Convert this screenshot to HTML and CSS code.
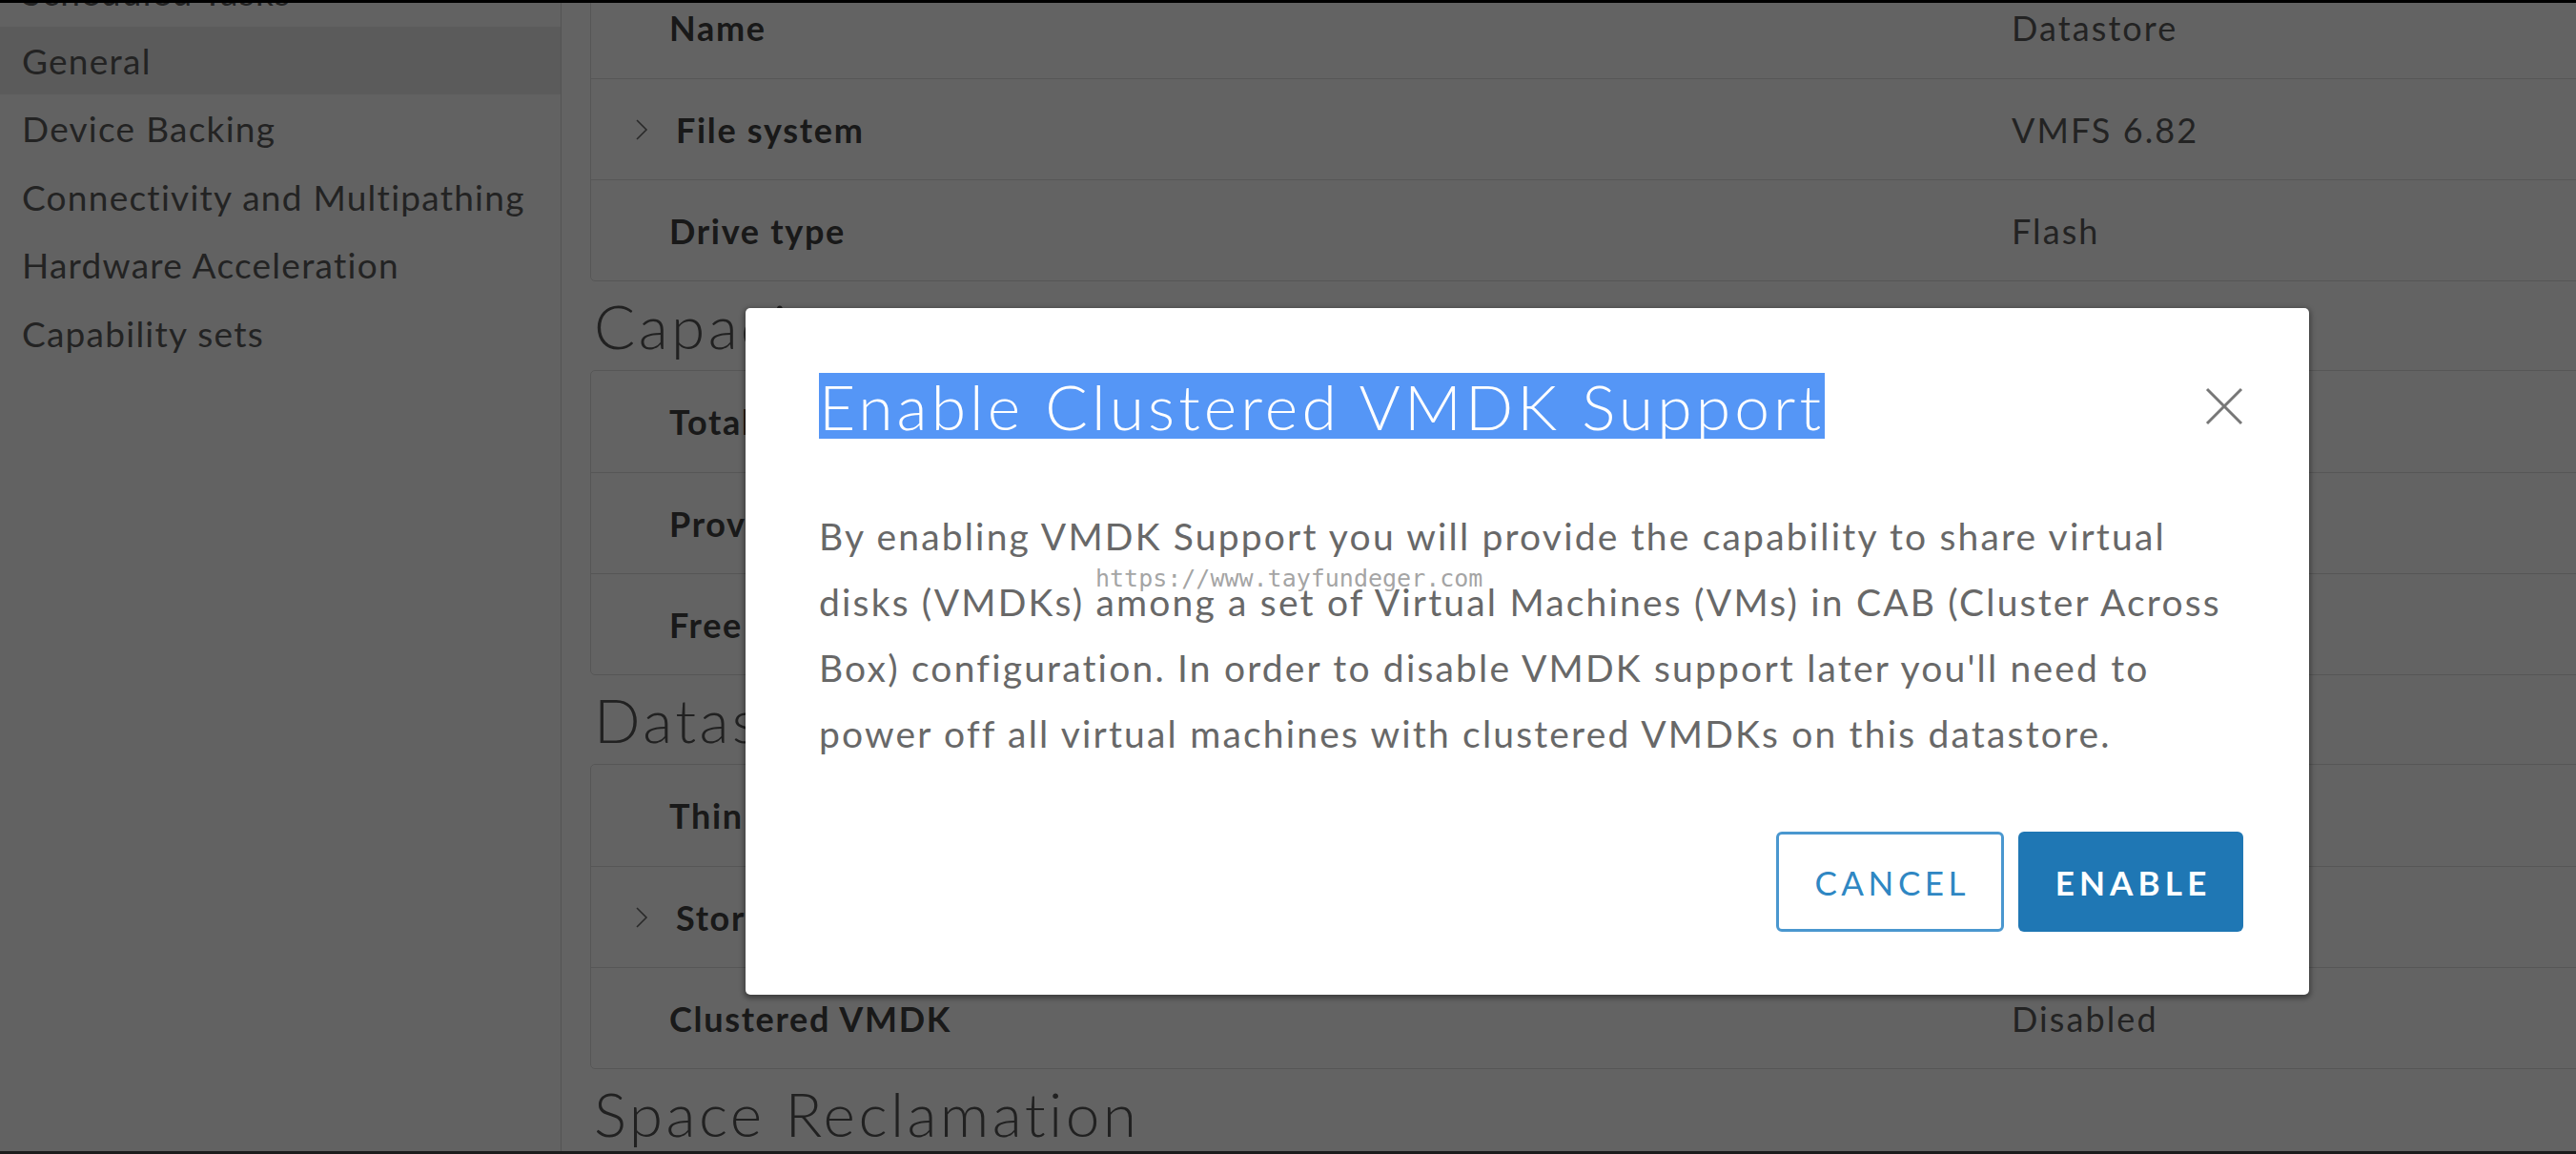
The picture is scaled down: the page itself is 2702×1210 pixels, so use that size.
FILE: index.html
```html
<!DOCTYPE html>
<html lang="en">
<head>
<meta charset="utf-8">
<title>Enable Clustered VMDK Support</title>
<link rel="stylesheet" href="styles.css">
</head>
<body>
<div class="app">
  <nav class="sidebar">
    <ul class="nav">
      <li class="nav-item">Scheduled Tasks</li>
      <li class="nav-item active">General</li>
      <li class="nav-item">Device Backing</li>
      <li class="nav-item">Connectivity and Multipathing</li>
      <li class="nav-item">Hardware Acceleration</li>
      <li class="nav-item">Capability sets</li>
    </ul>
  </nav>
  <main class="main">
    <div class="content">
      <section class="card">
        <div class="row"><div class="label">Name</div><div class="value">Datastore</div></div>
        <div class="row"><div class="label expandable"><svg class="caret" viewBox="0 0 14 24"><polyline points="2,2 12,12 2,22"/></svg>File system</div><div class="value">VMFS 6.82</div></div>
        <div class="row"><div class="label">Drive type</div><div class="value">Flash</div></div>
      </section>
      <h2 class="section-title">Capacity</h2>
      <section class="card">
        <div class="row"><div class="label">Total Capacity</div><div class="value"></div></div>
        <div class="row"><div class="label">Provisioned Space</div><div class="value"></div></div>
        <div class="row"><div class="label">Free Space</div><div class="value"></div></div>
      </section>
      <h2 class="section-title">Datastore Capabilities</h2>
      <section class="card">
        <div class="row"><div class="label">Thin Provisioning</div><div class="value"></div></div>
        <div class="row"><div class="label expandable"><svg class="caret" viewBox="0 0 14 24"><polyline points="2,2 12,12 2,22"/></svg>Storage I/O Control</div><div class="value"></div></div>
        <div class="row"><div class="label">Clustered VMDK</div><div class="value">Disabled</div></div>
      </section>
      <h2 class="section-title">Space Reclamation</h2>
    </div>
  </main>

  <div class="backdrop"></div>

  <div class="modal" role="dialog">
    <div class="modal-header">
      <h3 class="modal-title"><span class="selected">Enable Clustered VMDK Support</span></h3>
      <button class="close" aria-label="Close"><svg viewBox="0 0 40 40"><line x1="2" y1="2" x2="38" y2="38"/><line x1="38" y1="2" x2="2" y2="38"/></svg></button>
    </div>
    <div class="modal-body">
      <p class="message">By enabling VMDK Support you will provide the capability to share virtual<br>disks (VMDKs) among a set of Virtual Machines (VMs) in CAB (Cluster Across<br>Box) configuration. In order to disable VMDK support later you'll need to<br>power off all virtual machines with clustered VMDKs on this datastore.</p>
      <span class="watermark">https://www.tayfundeger.com</span>
    </div>
    <div class="modal-footer">
      <button class="btn btn-outline">CANCEL</button>
      <button class="btn btn-primary">ENABLE</button>
    </div>
  </div>
</div>
</body>
</html>
```

FILE: styles.css
```css
* { box-sizing: border-box; }
html, body { margin: 0; padding: 0; }
body {
  font-family: Lato, "Open Sans", sans-serif;
  background: #fff;
  overflow: hidden;
}
.app {
  position: relative;
  display: flex;
  height: 1210px;
  border-top: 3px solid #000;
  border-bottom: 3px solid #1c1c1c;
  overflow: hidden;
  background: #fff;
}

/* sidebar */
.sidebar {
  width: 589px;
  flex: none;
  border-right: 1px solid #d9d9d9;
  background: #fdfdfd;
}
.nav { list-style: none; margin: -47px 0 0; padding: 0; }
.nav-item {
  height: 71.5px;
  line-height: 71.5px;
  padding-left: 23px;
  font-size: 37px;
  letter-spacing: 0.034em;
  color: #5c5c5c;
  white-space: nowrap;
}
.nav-item.active { background: #ebebeb; }

/* main */
.main { flex: 1; min-width: 0; padding-left: 30px; }
.content { margin-top: -28px; margin-right: -20px; }
.card { border: 1px solid #dedede; border-radius: 5px; }
.row {
  display: grid;
  grid-template-columns: 1490px 1fr;
  align-items: center;
  height: 106px;
  border-top: 1px solid #dedede;
}
.row:first-child { border-top: 0; }
.label {
  display: flex;
  align-items: center;
  padding-left: 82px;
  font-size: 36px;
  font-weight: 700;
  letter-spacing: 0.047em;
  color: #404040;
  white-space: nowrap;
}
.label.expandable { padding-left: 46px; }
.caret {
  width: 14px;
  height: 24px;
  margin-right: 29px;
  fill: none;
  stroke: #6a6a6a;
  stroke-width: 1.6;
}
.value {
  font-size: 36px;
  letter-spacing: 0.058em;
  color: #5a5a5a;
  white-space: nowrap;
}
.section-title {
  margin: 0;
  height: 93px;
  line-height: 93px;
  padding-left: 4px;
  font-size: 64px;
  font-weight: 300;
  letter-spacing: 0.053em;
  color: #555;
  white-space: nowrap;
}

/* overlay + modal */
.backdrop { position: absolute; inset: 0; background: rgba(0, 0, 0, 0.61); }
.modal {
  position: absolute;
  left: 782px;
  top: 320px;
  width: 1640px;
  height: 720px;
  padding: 68px 69px 68px 77px;
  background: #fff;
  border-radius: 5px;
  box-shadow: 0 2px 5px 2px rgba(0, 0, 0, 0.35);
  display: flex;
  flex-direction: column;
}
.modal-header {
  display: flex;
  align-items: center;
  justify-content: space-between;
  height: 69px;
}
.modal-title {
  margin: 0;
  font-size: 66px;
  font-weight: 300;
  letter-spacing: 0.062em;
  line-height: 69px;
}
.selected {
  display: inline-block;
  height: 69px;
  background: #5596f6;
  color: #fff;
  white-space: nowrap;
}
.close {
  width: 40px;
  height: 40px;
  padding: 0;
  border: 0;
  background: none;
}
.close svg { display: block; width: 40px; height: 40px; stroke: #777; stroke-width: 3; }
.modal-body { position: relative; margin-top: 68px; }
.message {
  margin: 0;
  font-size: 39px;
  letter-spacing: 0.056em;
  line-height: 69px;
  color: #686868;
  white-space: nowrap;
}
.watermark {
  position: absolute;
  left: 290px;
  top: 64px;
  font-family: "DejaVu Sans Mono", monospace;
  font-size: 25px;
  line-height: 30px;
  color: rgba(140, 140, 140, 0.8);
}
.modal-footer {
  display: flex;
  justify-content: flex-end;
  gap: 15px;
  margin-top: 68px;
}
.btn {
  height: 105px;
  border-radius: 6px;
  font-family: Lato, "Open Sans", sans-serif;
  font-size: 35px;
  padding: 0;
}
.btn-outline {
  width: 239px;
  border: 3px solid #4a97cf;
  background: #fff;
  color: #2f87c3;
  font-weight: 400;
  letter-spacing: 0.13em;
  text-indent: 0.13em;
}
.btn-primary {
  width: 236px;
  border: 0;
  background: #1f77b4;
  color: #fff;
  font-weight: 700;
  letter-spacing: 0.148em;
  text-indent: 0.148em;
}
```
